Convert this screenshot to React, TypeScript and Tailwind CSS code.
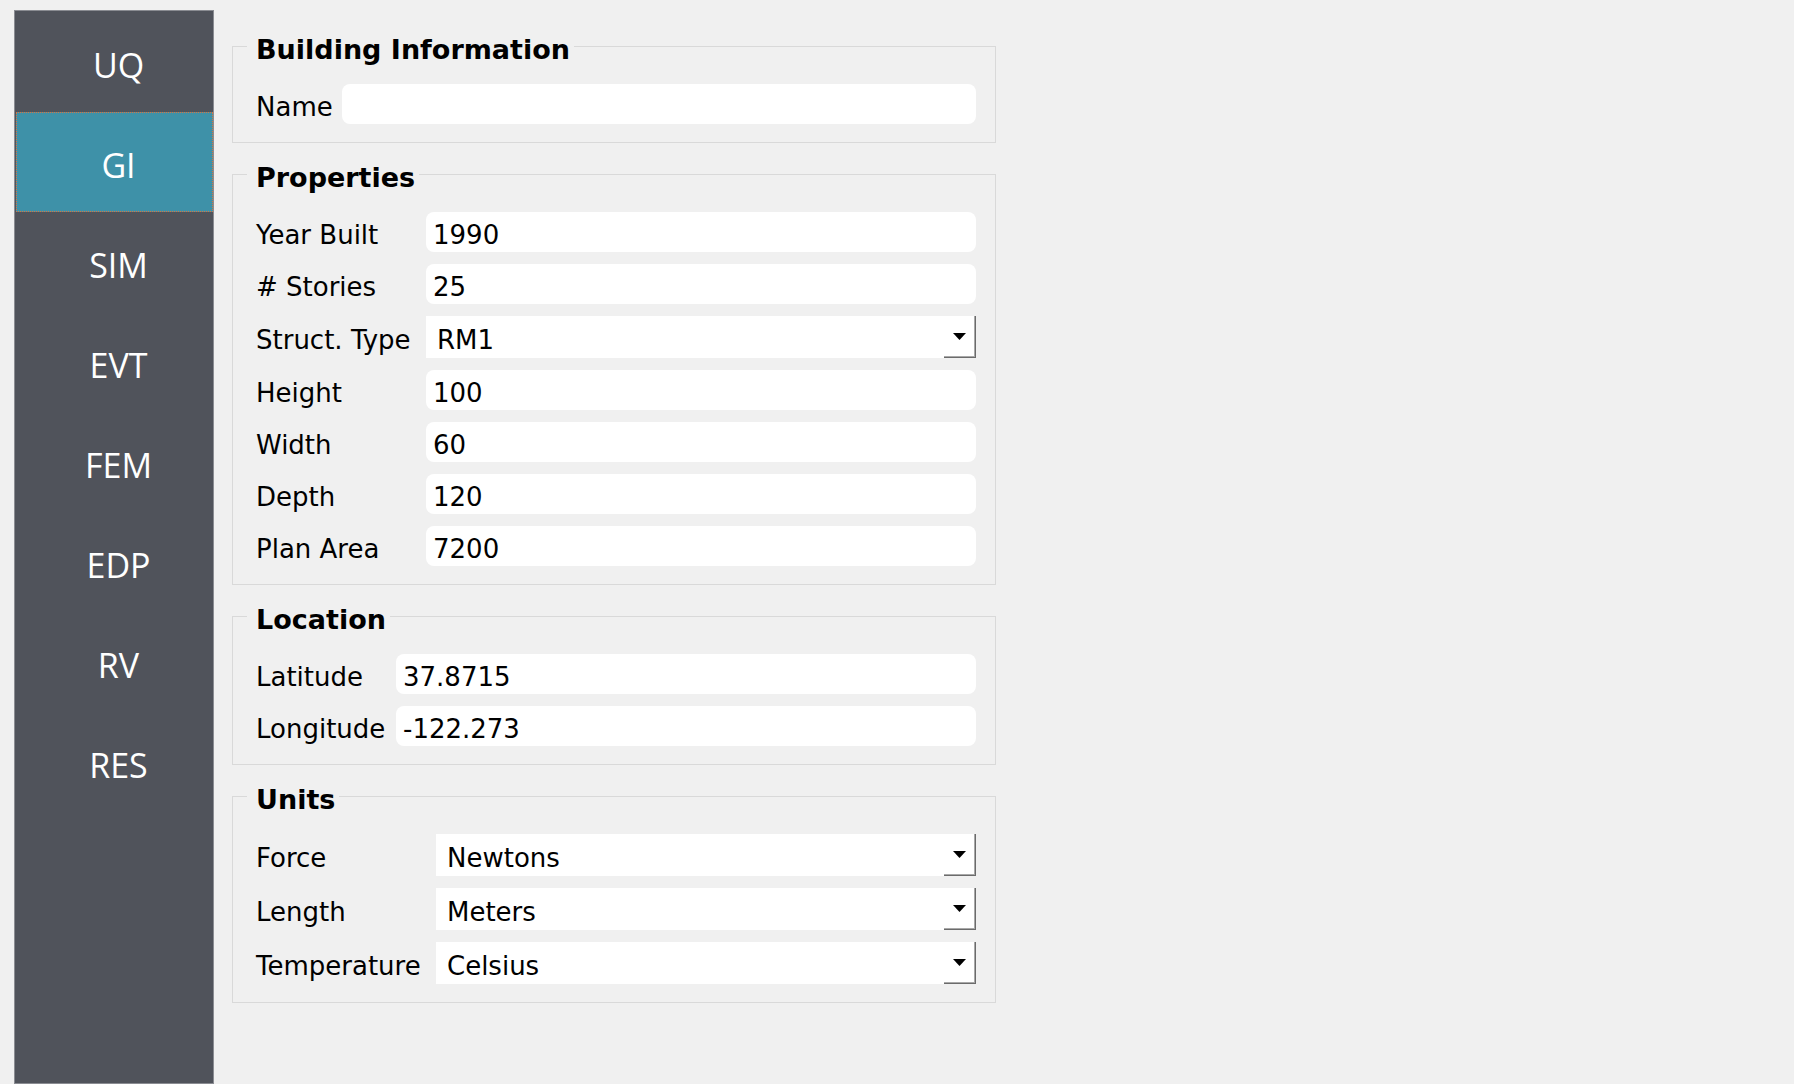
import React from 'react';

const navItems = ['UQ', 'GI', 'SIM', 'EVT', 'FEM', 'EDP', 'RV', 'RES'];

type Field = { label: string; value: string; combo?: boolean };

type Group = { title: string; cols: string; fields: Field[] };

const groups: Group[] = [
  {
    title: 'Building Information',
    cols: 'grid-cols-[86px_1fr]',
    fields: [{ label: 'Name', value: '' }],
  },
  {
    title: 'Properties',
    cols: 'grid-cols-[170px_1fr]',
    fields: [
      { label: 'Year Built', value: '1990' },
      { label: '# Stories', value: '25' },
      { label: 'Struct. Type', value: 'RM1', combo: true },
      { label: 'Height', value: '100' },
      { label: 'Width', value: '60' },
      { label: 'Depth', value: '120' },
      { label: 'Plan Area', value: '7200' },
    ],
  },
  {
    title: 'Location',
    cols: 'grid-cols-[140px_1fr]',
    fields: [
      { label: 'Latitude', value: '37.8715' },
      { label: 'Longitude', value: '-122.273' },
    ],
  },
  {
    title: 'Units',
    cols: 'grid-cols-[180px_1fr]',
    fields: [
      { label: 'Force', value: 'Newtons', combo: true },
      { label: 'Length', value: 'Meters', combo: true },
      { label: 'Temperature', value: 'Celsius', combo: true },
    ],
  },
];

const ComboBox: React.FC<{ value: string }> = ({ value }) => (
  <div className="h-[42px] flex bg-white">
    <div className="flex-1 flex items-center pl-[11px] pt-[6px] leading-[30px]">{value}</div>
    <div className="w-[32px] border-r border-b border-[#6b6b6b]">
      <div className="h-full flex items-center justify-center border-r border-b border-[#a8a8a8]">
        <svg width="13" height="7" viewBox="0 0 13 7">
          <path d="M0 0h13L6.5 7z" fill="#000" />
        </svg>
      </div>
    </div>
  </div>
);

const GroupBox: React.FC<{ group: Group }> = ({ group }) => (
  <div className="border border-[#d9d9d9] pl-[23px] pr-[19px] pb-[18px]">
    <div className="-mt-[11px] -ml-[9px] w-fit bg-[#f0f0f0] pl-[9px] pr-[4px] leading-[28px] text-[27px] font-bold font-['DejaVu_Sans',sans-serif]">
      {group.title}
    </div>
    <div className={`grid ${group.cols} gap-y-[12px] mt-[20px] items-center`}>
      {group.fields.map(f => (
        <React.Fragment key={f.label}>
          <span className="pt-[6px] leading-[30px] whitespace-nowrap">{f.label}</span>
          {f.combo ? (
            <ComboBox value={f.value} />
          ) : (
            <input
              readOnly
              value={f.value}
              className="h-[40px] w-full rounded-lg bg-white pl-[7px] pt-[6px] leading-[30px] outline-none"
            />
          )}
        </React.Fragment>
      ))}
    </div>
  </div>
);

export default function App() {
  return (
    <div className="h-screen overflow-hidden flex bg-[#f0f0f0] pl-[14px] pt-[10px] text-black text-[26px] font-['DejaVu_Sans',sans-serif]">
      <aside className="w-[200px] shrink-0 border border-[#8a8c92] bg-[#50535b] pt-px pl-px flex flex-col">
        {navItems.map(item => (
          <div
            key={item}
            className={`h-[100px] shrink-0 flex items-center justify-center pt-[5px] pl-[8px] text-[34px] leading-[46px] text-white font-['Open_Sans',sans-serif] ${
              item === 'GI' ? 'bg-[#3e91a8] border border-dotted border-[#d9743f]' : ''
            }`}
          >
            {item}
          </div>
        ))}
      </aside>
      <main className="ml-[18px] pt-[36px] w-[764px] flex flex-col gap-[31px]">
        {groups.map(g => (
          <GroupBox key={g.title} group={g} />
        ))}
      </main>
    </div>
  );
}
